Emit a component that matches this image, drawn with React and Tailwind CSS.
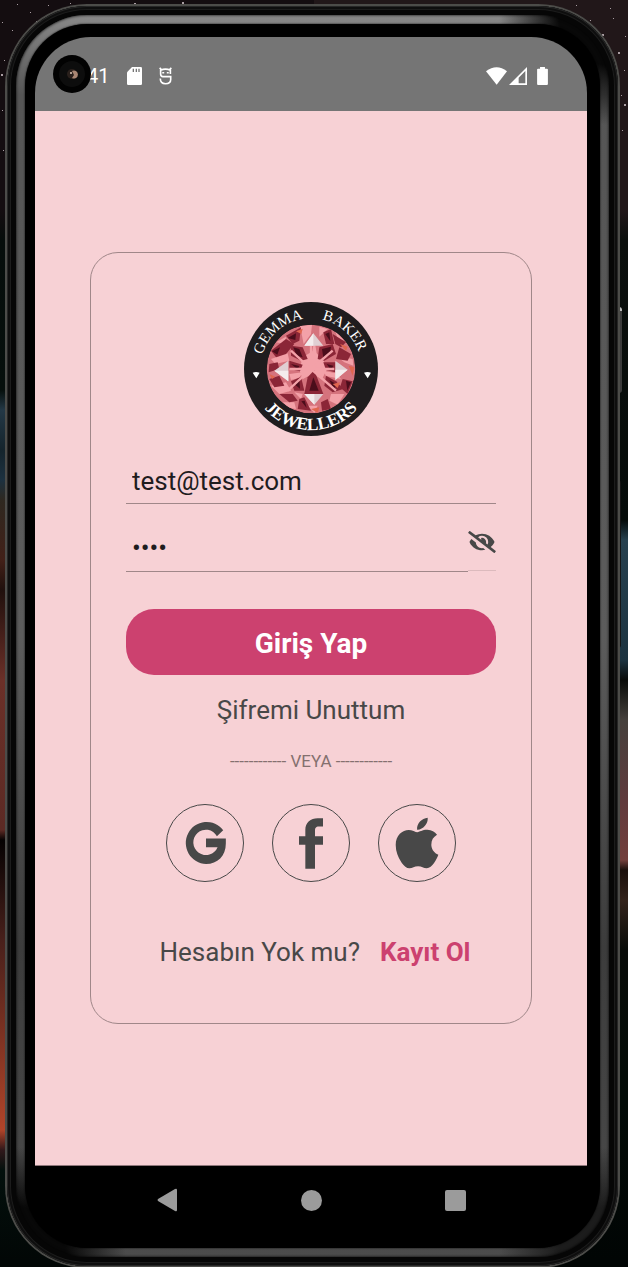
import { FaApple, FaEyeSlash } from "react-icons/fa";

const STARS = [
  [2, 22, 1], [17, 4, 1], [30, 12, 1], [48, 5, 1], [70, 3, 1], [96, 6, 1], [134, 3, 2], [182, 2, 2],
  [1, 74, 2], [4, 60, 1], [20, 42, 1], [12, 30, 1], [36, 21, 1], [2, 110, 1], [3, 150, 1],
  [530, 7, 1], [552, 12, 1], [576, 5, 1], [590, 20, 1], [602, 34, 2], [613, 18, 1], [618, 52, 2],
  [624, 70, 1], [621, 95, 1], [624, 104, 2], [622, 130, 1], [592, 30, 1], [610, 8, 1], [625, 36, 1],
];

const DARK_FACETS = [
  "105,170 150,135 175,150 150,180 120,190", "150,125 195,100 190,140 170,150", "165,155 200,160 215,195 195,200 165,185",
  "250,160 290,150 300,180 265,200 245,195", "262,115 285,105 295,150 270,150", "290,120 330,145 315,160 298,150",
  "310,160 345,180 335,200 300,195", "160,200 200,212 192,232 160,225", "262,205 298,205 298,235 270,228",
  "165,262 195,248 205,290 175,290", "215,250 235,228 262,300 205,300", "270,245 300,262 322,285 290,295 265,275",
  "320,255 350,262 335,300 312,280", "100,210 125,205 130,225 98,235", "100,255 130,245 145,275 115,280",
  "130,300 170,300 185,320 160,325", "190,315 205,310 225,350 185,345", "255,325 275,315 285,345 258,350",
];
const DEEP_FACETS = [
  "172,160 190,165 200,190 182,185", "258,165 285,158 280,185 262,192", "165,210 190,216 185,226", "272,210 292,215 285,228",
  "172,268 190,258 192,284", "232,250 248,290 220,290", "280,258 300,270 295,288", "155,132 180,118 178,138",
  "268,120 280,115 283,142", "196,322 206,320 212,342", "108,172 132,160 124,182", "330,260 345,265 334,290",
];
const LIGHT_FACETS = [
  "192,96 228,92 225,120 203,150", "105,195 155,178 160,200 118,210", "120,145 150,128 148,150", "250,98 275,105 250,128",
  "200,190 232,170 262,195 272,228 258,255 228,240 200,256 190,228", "160,240 200,235 190,252 165,258",
  "262,230 300,238 315,255 270,246", "298,112 325,140 305,135", "300,185 350,195 352,215 325,205",
  "105,275 150,265 165,290 130,300", "140,325 175,325 180,345 160,342", "285,300 325,300 305,332 280,320",
  "175,295 200,300 195,315", "225,196 235,135 245,196", "120,185 145,172 150,190", "215,335 245,335 235,357",
];
const ORANGE_FACETS = ["180,112 200,104 196,120", "312,150 335,158 330,170", "338,215 355,220 350,245", "100,240 118,248 108,255", "290,270 312,265 305,282", "225,345 250,340 245,356"];

function Facets({ shapes, className }) {
  return shapes.map((points) => <polygon key={points} points={points} className={className} />);
}

function Logo() {
  return (
    <svg viewBox="24 24 402 402" className="mx-auto size-[134px]" role="img" aria-label="Gemma Baker Jewellers">
      <defs>
        <path id="arc-top" d="M73 225A152 152 0 0 1 377 225" />
        <path id="arc-bottom" d="M42 225A183 183 0 0 0 408 225" />
        <clipPath id="stone"><circle cx="225" cy="225" r="133" /></clipPath>
      </defs>
      <circle cx="225" cy="225" r="201" fill="#1f1c1e" />
      <g clipPath="url(#stone)">
        <circle cx="225" cy="225" r="133" fill="#d5737d" />
        <Facets shapes={LIGHT_FACETS} className="fill-[#f3a1a8]" />
        <Facets shapes={DARK_FACETS} className="fill-[#8b2637]" />
        <Facets shapes={DEEP_FACETS} className="fill-[#4b0d1b]" />
        <Facets shapes={ORANGE_FACETS} className="fill-[#e0664f]" />
        <path d="M225 225L165 170M225 225L290 170M225 225L155 290M225 225L300 290M225 225V155M160 225H295" stroke="#f3a1a8" strokeWidth="7" />
        <path d="M205 155L232 118L262 155ZM115 230L157 200V262ZM298 200L335 227L298 258ZM205 300H262L235 332Z" fill="#e0cfd3" />
        <path d="M232 118V155H205ZM157 230V262L115 230ZM298 227H335L298 258ZM235 300V332L205 300Z" fill="#f4eced" />
      </g>
      <g fill="#fff" fontFamily="'Liberation Serif', serif">
        <text fontSize="45" textAnchor="middle"><textPath href="#arc-top" startOffset="27%">GEMMA</textPath></text>
        <text fontSize="45" textAnchor="middle"><textPath href="#arc-top" startOffset="73%">BAKER</textPath></text>
        <text fontSize="52" fontWeight="bold" textAnchor="middle"><textPath href="#arc-bottom" startOffset="50%">JEWELLERS</textPath></text>
      </g>
      <path d="M50 236Q60 232 71 236L61 253ZM384 236Q394 232 405 236L395 253Z" fill="#fff" />
    </svg>
  );
}

function StatusBar() {
  return (
    <header className="flex h-[74px] items-center bg-[#757575] pl-[18px] pr-[39px] text-white">
      <svg viewBox="0 0 38 38" className="z-10 size-[38px]" aria-hidden="true">
        <circle cx="19" cy="19" r="19" fill="#020202" />
        <circle cx="19" cy="19" r="13" fill="#0d0d0d" />
        <circle cx="19" cy="19" r="5" fill="#2a201c" />
        <path d="M19 16a4 4 0 1 1 0 7l2-3Z" fill="#a98673" />
        <circle cx="18" cy="18" r="1" fill="#dfc7b8" />
      </svg>
      <span className="-ml-1 pt-1 text-xl leading-6">41</span>
      <svg viewBox="384 200 45 54" className="ml-[18px] mt-1 h-[18px] w-[15px]" aria-hidden="true">
        <path d="M399 200H425Q429 200 429 204V250Q429 254 425 254H388Q384 254 384 250V216Z" fill="#fff" />
        <path d="M401 205h4v10h-4zM410 205h4v10h-4zM418 205h4v10h-4z" fill="#757575" />
      </svg>
      <svg viewBox="480 199 40 54" className="ml-[17px] mt-1 h-[18px] w-[13px]" fill="none" stroke="#fff" strokeWidth="5" aria-hidden="true">
        <path d="M482 201L489 208M518 201L511 208M485 208Q500 202 515 208V220M485 206V220Q485 228 492 228H516V237C516 246 510 250 500 250S484 246 484 234" />
        <path d="M490 216h6M504 216h6" />
      </svg>
      <svg viewBox="78 200 63 54" className="ml-auto mt-1 h-[18px] w-[21px]" aria-hidden="true">
        <path d="M110 253L78 213Q110 189 141 213Z" fill="#fff" />
      </svg>
      <svg viewBox="147 200 54 54" className="ml-0.5 mt-1 size-[18px]" aria-hidden="true">
        <path fillRule="evenodd" d="M147 254L201 200V254ZM176 232V249H196V212Z" fill="#fff" />
      </svg>
      <svg viewBox="231 198 33 55" className="ml-2.5 mt-1 h-[18px] w-[11px]" aria-hidden="true">
        <path d="M240 198H255V203H261Q264 203 264 206V250Q264 253 261 253H234Q231 253 231 250V206Q231 203 234 203H240Z" fill="#fff" />
      </svg>
    </header>
  );
}

function GoogleIcon() {
  return (
    <svg viewBox="108 95 123 127" className="h-[42px] w-[41px]" fill="currentColor" aria-hidden="true">
      <path d="M171 145H231V160C231 198 206 222 171 222A63 63.5 0 1 1 223 120L204 138A38 38.5 0 1 0 206 171H171Z" />
    </svg>
  );
}

function FacebookIcon() {
  return (
    <svg viewBox="447 82 72 152" className="h-[51px] w-6" fill="currentColor" aria-hidden="true">
      <path d="M466 234V162H447V136H466V117C466 95 482 82 503 82H519V107H507C497 107 495 112 495 120V136H519V162H495V234Z" />
    </svg>
  );
}

function SocialButton({ label, children }) {
  return (
    <button type="button" aria-label={label} className="flex size-[78px] items-center justify-center rounded-full border border-[#484848]">
      {children}
    </button>
  );
}

function LoginCard() {
  return (
    <form className="mx-[55px] flex flex-1 flex-col rounded-[28px] border border-[#a08789] px-[35px] pb-[55px] pt-[49px] text-[#484848]">
      <Logo />
      <input
        type="email"
        aria-label="E-posta"
        defaultValue="test@test.com"
        className="mt-6 h-11 w-full min-w-0 border-b border-[#a08789] px-1.5 pb-0.5 text-[26px] text-[#1f1c1e] outline-none"
      />
      <div className="mt-6 flex">
        <input
          type="password"
          aria-label="Şifre"
          defaultValue="test"
          className="h-11 w-0 min-w-0 flex-1 border-b border-[#a08789] px-1.5 pb-1 text-[26px] text-[#1f1c1e] outline-none"
        />
        <button type="button" aria-label="Şifreyi göster" className="h-[43px] border-b border-[#dcbabd] pb-3.5">
          <FaEyeSlash className="h-[22px] w-7" />
        </button>
      </div>
      <button type="submit" className="mt-[37px] h-[66px] rounded-[28px] bg-[#cc416f] pt-1 text-[28px] font-bold text-white">
        Giriş Yap
      </button>
      <a href="#sifre" className="mt-4 text-center text-[26px] leading-[38px]">Şifremi Unuttum</a>
      <p className="mt-5 text-center text-[17px] leading-6 text-[#84706f]">------------ VEYA ------------</p>
      <div className="mt-[31px] flex justify-center gap-7">
        <SocialButton label="Google"><GoogleIcon /></SocialButton>
        <SocialButton label="Facebook"><FacebookIcon /></SocialButton>
        <SocialButton label="Apple"><FaApple className="h-[58px] w-[44px]" /></SocialButton>
      </div>
      <p className="mt-[54px] flex justify-center gap-5 whitespace-nowrap pl-2 text-[26px] leading-8">
        Hesabın Yok mu?
        <a href="#kayit" className="font-bold text-[#cc416f]">Kayıt Ol</a>
      </p>
    </form>
  );
}

function NavBar() {
  return (
    <nav className="mb-3.5 flex h-[68px] items-center justify-center gap-[123px] text-[#9b9b9b]">
      <button type="button" aria-label="Geri">
        <svg viewBox="0 0 21 24" className="h-6 w-[21px]" fill="currentColor" aria-hidden="true"><path d="M1 11L18 1Q20 0 20 2V22Q20 24 18 23L1 13Q0 12 1 11Z" /></svg>
      </button>
      <button type="button" aria-label="Ana ekran" className="size-[21px] rounded-full bg-current" />
      <button type="button" aria-label="Son uygulamalar" className="size-[21px] rounded-xs bg-current" />
    </nav>
  );
}

export default function App() {
  return (
    <div className="relative flex min-h-screen overflow-hidden bg-[#020706] pl-[5px] pr-2 pt-1 font-[Roboto,sans-serif]">
      <div className="absolute inset-y-0 left-0 w-1/2 bg-[linear-gradient(#140d10_0,#140d10_210px,#060d0b_240px,#060f0c_390px,#233846_410px,#14242c_450px,#1c3140_480px,#2e2820_500px,#422018_560px,#20100d_590px,#6b3028_680px,#5c2a24_830px,#050202_840px,#48201b_940px,#b04429_1130px,#30181a_1150px,#03100c_1170px,#020706_1260px)]" />
      <div className="absolute inset-y-0 right-0 w-1/2 bg-[linear-gradient(#211719_0,#211719_210px,#0b0f0d_240px,#050b09_520px,#27404e_540px,#1c3340_660px,#090b09_680px,#45403c_720px,#603b3d_800px,#733f3c_860px,#1a0f0b_870px,#33231b_900px,#080b08_950px,#020b07_1100px,#010504_1260px)]" />
      <svg className="absolute left-0 top-0 h-40 w-full" aria-hidden="true">
        {STARS.map(([x, y, size]) => <rect key={`${x}-${y}`} x={x} y={y} width={size} height={size} fill="#a99da2" />)}
      </svg>
      <div className="absolute right-1.5 top-[307px] h-[86px] w-1.5 rounded-sm border-t-4 border-[#bbb] bg-[#3b3b3b]" />
      <div className="absolute right-[7px] top-[480px] h-[168px] w-1.5 rounded-sm bg-[#151515]" />
      <div className="relative flex min-w-0 flex-1 rounded-[82px] bg-[#4c4c49] p-0.5">
        <div className="flex min-w-0 flex-1 rounded-[80px] bg-[#060606] p-[9px] shadow-[inset_0_0_0_1px_#262626,inset_0_0_0_3px_#0e0e0e,inset_0_0_0_4px_#1c1c1c]">
          <div className="flex min-w-0 flex-1 rounded-[71px] bg-[radial-gradient(circle_at_100%_0,#080808_50px,transparent_110px),radial-gradient(circle_at_0_100%,#080808_50px,transparent_110px),radial-gradient(circle_at_100%_100%,#1c1c1c_50px,transparent_110px),linear-gradient(#898989_0,#555_80px,#5c5c5c_50%,#3c3c3c_75%,#4c4c4c)] p-[9px] shadow-[inset_0_0_3px_#000]">
            <div className="flex min-w-0 flex-1 flex-col rounded-[62px] bg-black pl-[10px] pr-[13px] pt-[13px] shadow-[0_0_2px_#000]">
              <div className="overflow-hidden rounded-t-[56px]"><StatusBar /></div>
              <main className="flex flex-1 flex-col border-b border-[#8f777b] bg-[#f7d1d5] py-[141px]">
                <LoginCard />
              </main>
              <NavBar />
            </div>
          </div>
        </div>
      </div>
    </div>
  );
}
